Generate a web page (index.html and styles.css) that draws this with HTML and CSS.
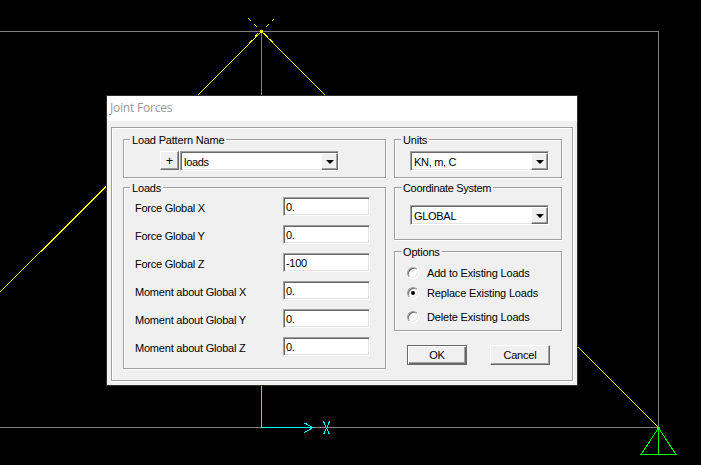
FILE: index.html
```html
<!DOCTYPE html>
<html lang="en">
<head>
<meta charset="utf-8">
<title>Joint Forces</title>
<link rel="stylesheet" href="styles.css">
</head>
<body>
<main class="workspace">
  <svg class="model" width="701" height="465" viewBox="0 0 701 465" fill="none" shape-rendering="crispEdges" aria-hidden="true">
    <path class="grid-line" d="M0 31.500H659M0 427.500H659M658.500 31V428M261.500 31V428"/>
    <path class="member" d="M261.500 31.500L63.500 229L0 292M261.500 31.500L658.500 427.500"/>
    <path class="member" d="M248 18l3 3M254 24l3 3M274 19l-2 2M269 24l-3 3M248.500 43.500l3-3M254.500 37.500l3-4M273.500 42.500l-3-3M268.500 37.500l-4-4"/>
    <path class="joint" d="M260 30h3v3h-3z"/>
    <path class="axis" d="M261.500 385V427.500H313M304.500 423l8.500 4.500l-8.500 5M323.500 421.500l6 13M329.500 421.500l-6 13"/>
    <path class="support" d="M658.500 428L641 454.500H676L658.500 428V454"/>
    <path class="support-pin" d="M657 427h3v3h-3z"/>
  </svg>

  <section class="dialog">
    <header class="titlebar">Joint Forces</header>
    <div class="panel">
      <div class="column">
        <div class="group pattern">
          <span class="legend">Load Pattern Name</span>
          <button class="add">+</button>
          <div class="combo"><span>loads</span><i class="drop"></i></div>
        </div>
        <div class="group loads">
          <span class="legend">Loads</span>
          <label class="row"><span class="force">Force Global X</span><span class="field">0.</span></label>
          <label class="row"><span class="force">Force Global Y</span><span class="field">0.</span></label>
          <label class="row"><span class="force">Force Global Z</span><span class="field">-100</span></label>
          <label class="row"><span class="moment">Moment about Global X</span><span class="field">0.</span></label>
          <label class="row"><span class="moment">Moment about Global Y</span><span class="field">0.</span></label>
          <label class="row"><span class="moment">Moment about Global Z</span><span class="field">0.</span></label>
        </div>
      </div>
      <div class="column">
        <div class="group units">
          <span class="legend">Units</span>
          <div class="combo"><span>KN, m, C</span><i class="drop"></i></div>
        </div>
        <div class="group coords">
          <span class="legend">Coordinate System</span>
          <div class="combo"><span>GLOBAL</span><i class="drop"></i></div>
        </div>
        <div class="group options">
          <span class="legend">Options</span>
          <label class="option"><i class="radio"></i><span>Add to Existing Loads</span></label>
          <label class="option"><i class="radio checked"></i><span>Replace Existing Loads</span></label>
          <label class="option"><i class="radio"></i><span>Delete Existing Loads</span></label>
        </div>
        <div class="actions">
          <button class="ok">OK</button>
          <button class="cancel">Cancel</button>
        </div>
      </div>
    </div>
  </section>
</main>
</body>
</html>
```
FILE: styles.css
```css
* { box-sizing: border-box; }
body { margin: 0; background: #000; overflow: hidden; }
.workspace { position: relative; width: 701px; height: 465px; background: #000; }
.model { display: block; }
.grid-line { stroke: #808080; }
.member { stroke: #ff0; }
.joint { fill: #ff0; }
.axis { stroke: #0ff; }
.support { stroke: #0f0; }
.support-pin { fill: #0f0; }

.dialog {
  position: absolute;
  left: 107px;
  top: 96px;
  width: 470px;
  height: 289px;
  background: #f0f0f0;
  box-shadow: 0 0 0 1px #302d2d;
  font: 11px/14px "Liberation Sans", Arial, sans-serif;
  letter-spacing: -0.18px;
  color: #000;
  white-space: nowrap;
}
.titlebar {
  height: 25px;
  padding-left: 3px;
  background: #fff;
  color: #999;
  font: 12px/24px "Open Sans", "Noto Sans", sans-serif;
  letter-spacing: -0.2px;
}
.panel {
  display: flex;
  gap: 8px;
  width: 462px;
  height: 254px;
  margin: 6px 0 0 4px;
  padding: 11px 0 0 11px;
}
.panel, .group {
  border: 1px solid #a0a0a0;
  box-shadow: 1px 1px 0 #fff, inset 1px 1px 0 #fff;
}
.column { display: flex; flex-direction: column; gap: 9px; }
.group { position: relative; width: 263px; }
.column + .column .group { width: 168px; }
.legend {
  position: absolute;
  left: 6px;
  top: -7px;
  padding: 0 2px;
  background: #f0f0f0;
}
.pattern { display: flex; gap: 1px; height: 39px; padding: 11px 0 0 36px; }
.loads { height: 182px; padding: 9px 0 0 11px; }
.units { height: 39px; padding: 11px 0 0 15px; }
.coords { height: 53px; padding: 17px 0 0 15px; }
.coords .legend { letter-spacing: -0.32px; }
.options { height: 80px; margin-top: 2px; padding: 14px 0 0 12px; }

.combo {
  display: flex;
  justify-content: space-between;
  width: 139px;
  height: 20px;
  border: 1px solid;
  border-color: #a0a0a0 #fff #fff #a0a0a0;
  background: #fff;
  box-shadow: inset 1px 1px 0 #696969, inset -1px -1px 0 #e3e3e3;
  padding: 1px 0 0 3px;
  line-height: 18px;
  letter-spacing: -0.3px;
}
.pattern .combo { width: 159px; }
.drop {
  display: flex;
  align-items: center;
  justify-content: center;
  width: 17px;
  height: 17px;
}
.drop::before {
  content: "";
  border: 4px solid transparent;
  border-top-color: #000;
  border-bottom: 0;
}
.drop, .add, .cancel {
  border: 1px solid;
  border-color: #fff #696969 #696969 #fff;
  background: #f0f0f0;
  box-shadow: inset -1px -1px 0 #a0a0a0;
}
button { padding: 0; font: inherit; letter-spacing: inherit; color: #000; }
.add { width: 19px; height: 19px; font-size: 13px; line-height: 14px; }

.row { display: flex; height: 28px; }
.row > span:first-child { width: 148px; padding-top: 4px; }
.field {
  width: 87px;
  height: 19px;
  border: 1px solid;
  border-color: #a0a0a0 #fff #fff #a0a0a0;
  background: #fff;
  box-shadow: inset 1px 1px 0 #696969, inset -1px -1px 0 #e3e3e3;
  padding-left: 2px;
  line-height: 19px;
  letter-spacing: -0.3px;
}
.force { letter-spacing: -0.25px; }
.moment { letter-spacing: -0.21px; }

.option { display: flex; height: 20px; align-items: flex-start; gap: 8px; }
.option:nth-of-type(2) { height: 24px; }
.radio {
  display: flex;
  width: 12px;
  height: 12px;
  margin-top: 1px;
  border: 1px solid;
  border-color: #a0a0a0 #fff #fff #a0a0a0;
  border-radius: 50%;
  background: #fff;
  box-shadow: inset 1px 1px 0 #696969, inset -1px -1px 0 #e3e3e3;
}
.checked::before { content: ""; width: 4px; height: 4px; margin: 3px; border-radius: 50%; background: #000; }

.actions { display: flex; gap: 23px; padding: 5px 0 0 13px; }
.actions button { width: 60px; height: 20px; line-height: 18px; }
.ok {
  border: 1px solid #696969;
  background: #f0f0f0;
  box-shadow: inset 1px 1px 0 #fff, inset -1px -1px 0 #696969, inset -2px -2px 0 #a0a0a0;
}
```
